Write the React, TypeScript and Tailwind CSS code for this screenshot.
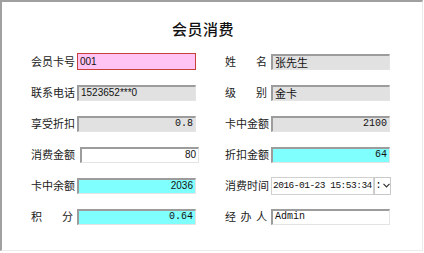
import React from 'react';

const cjk = { fontFamily: '"Noto Sans CJK SC", "Noto Sans", sans-serif' };
const mono = { fontFamily: '"Liberation Mono", "Noto Sans CJK SC", monospace', fontSize: '10px' };
const sans = { fontFamily: '"Liberation Sans", "Noto Sans CJK SC", sans-serif', fontSize: '10px' };

// sunken win32 style edit box
const sunken = 'border-t-2 border-l-2 border-t-[#9c9c9c] border-l-[#9c9c9c] border-b border-r border-b-[#e4e4e4] border-r-[#e4e4e4]';

function Label({ chars }: { chars: string[] }) {
  return (
    <div className="w-[42px] flex justify-between text-[11px] text-[#222]" style={cjk}>
      {chars.map((c, i) => (
        <span key={i}>{c}</span>
      ))}
    </div>
  );
}

type FieldProps = {
  value: string;
  kind: 'pink' | 'gray' | 'cyan' | 'white';
  right?: boolean;
  font?: React.CSSProperties;
  extra?: string;
};

function Field({ value, kind, right, font = sans, extra = '' }: FieldProps) {
  const bg =
    kind === 'pink'
      ? 'bg-[#ffc4f3] border border-[#c8403c] h-[17px]'
      : kind === 'gray'
      ? `bg-[#e1e1e1] ${sunken} h-4`
      : kind === 'cyan'
      ? `bg-[#80ffff] ${sunken} h-4`
      : `bg-white ${sunken} h-4`;
  return (
    <div
      className={`w-[119px] flex items-center px-[2px] leading-none text-[#111] ${bg} ${right ? 'justify-end' : ''} ${extra}`}
      style={font}
    >
      {value}
    </div>
  );
}

function Row({ children }: { children: React.ReactNode }) {
  return <div className="h-[31px] flex items-center">{children}</div>;
}

function Cell({ label, children }: { label: string[]; children: React.ReactNode }) {
  return (
    <div className="flex items-center gap-[4px]">
      <Label chars={label} />
      {children}
    </div>
  );
}

export default function App() {
  return (
    <div className="w-[424px] h-[253px] bg-white">
      <div className="w-[423px] h-[251px] bg-white border-l-2 border-t-2 border-[#a0a0a0] border-r border-b border-r-[#ebebeb] border-b-[#ebebeb]">
        <div className="h-[44px] flex items-end justify-center pr-[18px] pb-[10px]">
          <span className="text-[15px] font-medium text-[#111] leading-none tracking-[0.5px]" style={cjk}>
            会员消费
          </span>
        </div>
        <div className="flex pl-[29px] gap-[26px]">
          <div className="flex flex-col">
            <Row>
              <Cell label={['会', '员', '卡', '号']}>
                <Field value="001" kind="pink" />
              </Cell>
            </Row>
            <Row>
              <Cell label={['联', '系', '电', '话']}>
                <Field value="1523652***0" kind="gray" />
              </Cell>
            </Row>
            <Row>
              <Cell label={['享', '受', '折', '扣']}>
                <Field value="0.8" kind="gray" right font={mono} />
              </Cell>
            </Row>
            <Row>
              <Cell label={['消', '费', '金', '额']}>
                <Field value="80" kind="white" right extra="ml-[3px]" />
              </Cell>
            </Row>
            <Row>
              <Cell label={['卡', '中', '余', '额']}>
                <Field value="2036" kind="cyan" right />
              </Cell>
            </Row>
            <Row>
              <Cell label={['积', '分']}>
                <Field value="0.64" kind="cyan" right font={mono} />
              </Cell>
            </Row>
          </div>
          <div className="flex flex-col">
            <Row>
              <Cell label={['姓', '名']}>
                <Field value="张先生" kind="gray" font={{ ...cjk, fontSize: '11px' }} />
              </Cell>
            </Row>
            <Row>
              <Cell label={['级', '别']}>
                <Field value="金卡" kind="gray" font={{ ...cjk, fontSize: '11px' }} />
              </Cell>
            </Row>
            <Row>
              <Cell label={['卡', '中', '金', '额']}>
                <Field value="2100" kind="gray" right font={mono} />
              </Cell>
            </Row>
            <Row>
              <Cell label={['折', '扣', '金', '额']}>
                <Field value="64" kind="cyan" right font={mono} />
              </Cell>
            </Row>
            <Row>
              <Cell label={['消', '费', '时', '间']}>
                <div className="flex h-[18px]">
                  <div
                    className="w-[103px] h-[18px] flex items-center px-[1px] bg-white border border-[#d0d0d0] leading-none text-[#111] overflow-hidden whitespace-nowrap tracking-[-0.5px]"
                    style={{ ...mono, fontSize: '9.5px' }}
                  >
                    2016-01-23 15:53:34
                  </div>
                  <div className="w-[17px] h-[18px] flex items-center justify-center gap-[1px] border border-[#c8c8c8] bg-white text-[10px] leading-none" style={mono}>
                    <span>:</span>
                    <svg width="7" height="5" viewBox="0 0 7 5">
                      <path d="M0.5 0.8 L3.5 3.8 L6.5 0.8" fill="none" stroke="#333" strokeWidth="1.2" />
                    </svg>
                  </div>
                </div>
              </Cell>
            </Row>
            <Row>
              <Cell label={['经', '办', '人']}>
                <Field value="Admin" kind="white" font={mono} />
              </Cell>
            </Row>
          </div>
        </div>
      </div>
    </div>
  );
}
